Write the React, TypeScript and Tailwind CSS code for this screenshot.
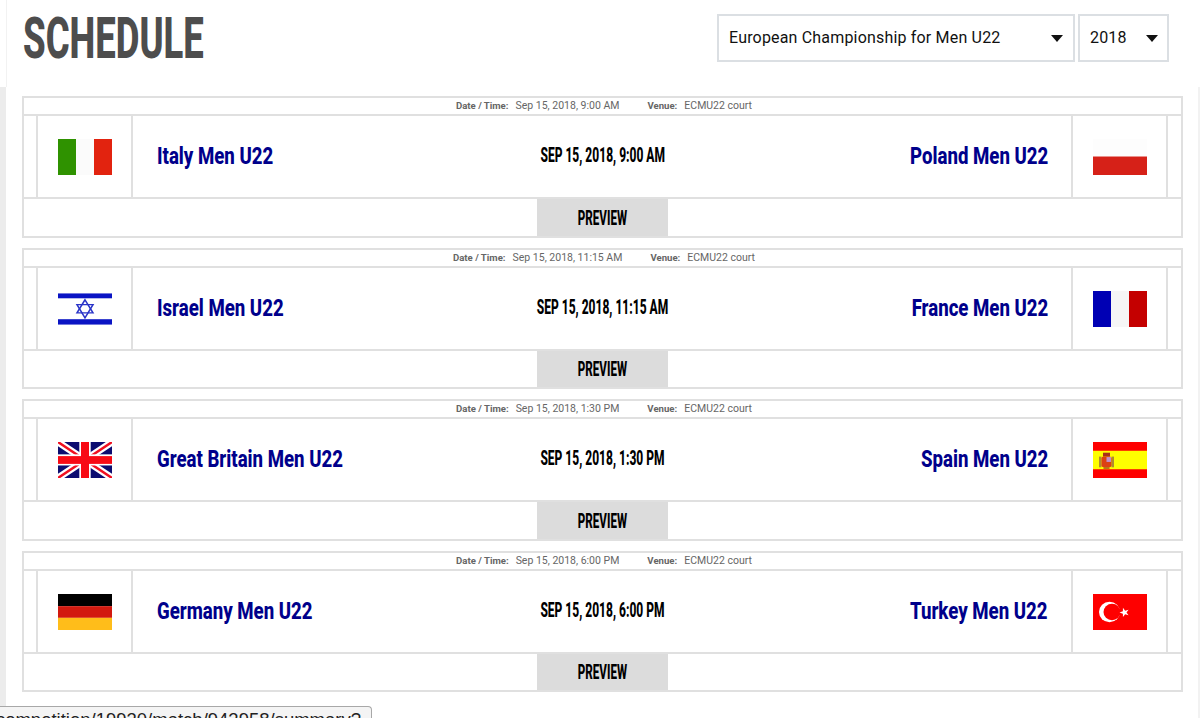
import React from "react";

const Flag = ({ children }: { children: React.ReactNode }) => (
  <svg width="54" height="36" viewBox="0 0 54 37" preserveAspectRatio="none">{children}</svg>
);
const Italy = () => (
  <Flag><rect width="18" height="37" fill="#2f9200"/><rect x="18" width="18" height="37" fill="#fbfbfb"/><rect x="36" width="18" height="37" fill="#e2230f"/></Flag>
);
const Poland = () => (
  <Flag><rect width="54" height="18" fill="#fdfdfd"/><rect y="18" width="54" height="19" fill="#d62118"/></Flag>
);
const Israel = () => (
  <Flag>
    <rect width="54" height="37" fill="#fff"/>
    <rect y="2.500" width="54" height="5" fill="#0a14c4"/>
    <rect y="29" width="54" height="5.500" fill="#0a14c4"/>
    <g fill="none" stroke="#2a34c8" strokeWidth="1.500">
      <path d="M27 9 L35 22.500 H19 Z"/>
      <path d="M27 27.500 L19 14 H35 Z"/>
    </g>
  </Flag>
);
const France = () => (
  <Flag><rect width="18" height="37" fill="#0000b4"/><rect x="18" width="18" height="37" fill="#f6f6f6"/><rect x="36" width="18" height="37" fill="#c40000"/></Flag>
);
const UK = () => (
  <Flag>
    <rect width="54" height="37" fill="#0c0c70"/>
    <path d="M0 0L54 37M54 0L0 37" stroke="#fff" strokeWidth="7"/>
    <path d="M0 0L54 37M54 0L0 37" stroke="#f01020" strokeWidth="2.500"/>
    <rect x="21.300" width="11.400" height="37" fill="#fff"/>
    <rect y="12.700" width="54" height="11.400" fill="#fff"/>
    <rect x="23" width="8" height="37" fill="#f80a14"/>
    <rect y="14.500" width="54" height="8" fill="#f80a14"/>
  </Flag>
);
const Spain = () => (
  <Flag>
    <rect width="54" height="37" fill="#fe0000"/>
    <rect y="9" width="54" height="19" fill="#fefe00"/>
    <rect x="6" y="15" width="2.500" height="11" fill="#b08a30"/>
    <rect x="18.500" y="15" width="2.500" height="11" fill="#b08a30"/>
    <rect x="10" y="11" width="7" height="4" fill="#a8301a"/>
    <rect x="8.500" y="15" width="10" height="11" rx="2" fill="#dc3f14"/>
    <rect x="13.500" y="15.500" width="4.500" height="5" fill="#c090d0"/>
    <rect x="10.500" y="26" width="6" height="1.500" fill="#a05020"/>
  </Flag>
);
const Germany = () => (
  <Flag><rect width="54" height="12.500" fill="#000"/><rect y="12.500" width="54" height="12" fill="#d2190f"/><rect y="24.500" width="54" height="12.500" fill="#ffbd1a"/></Flag>
);
const Turkey = () => (
  <Flag>
    <rect width="54" height="37" fill="#fe0000"/>
    <circle cx="16.500" cy="18.500" r="10.500" fill="#fff"/>
    <circle cx="19" cy="18.500" r="8.500" fill="#fe0000"/>
    <path d="M26.500 19L29.880 17.820 29.950 14.250 32.120 17.100 35.550 16.060 33.500 19 35.550 21.940 32.120 20.900 29.950 23.760 29.880 20.180Z" fill="#fff"/>
  </Flag>
);

const Name = ({ children, right }: { children: string; right?: boolean }) => (
  <span className={`mt-[1px] inline-block whitespace-nowrap text-[24px] leading-none font-extrabold text-[#00008b] scale-x-[0.775] ${right ? "origin-right" : "origin-left"}`}>{children}</span>
);

type CardProps = {
  home: string;
  away: string;
  date: string;
  A: () => React.ReactElement;
  B: () => React.ReactElement;
  foot: string;
  mt: string;
};

const Card = ({ home, away, date, A, B, foot, mt }: CardProps) => (
  <div className={`border-2 border-[#e0e0e0] bg-white ${mt}`}>
    <div className="flex h-[18px] items-center justify-center border-b-2 border-[#e0e0e0] pl-[3px] text-[#666]">
      <span className="mr-[7px] text-[9.600px] font-bold">Date / Time:</span>
      <span className="text-[10.500px]">{date}</span>
      <span className="mr-[7px] ml-[28px] text-[9.600px] font-bold">Venue:</span>
      <span className="text-[10.500px]">ECMU22 court</span>
    </div>
    <div className="flex h-[83px] border-b-2 border-[#e0e0e0]">
      <div className="w-[14px] border-r-2 border-[#e0e0e0]" />
      <div className="flex w-[95px] items-center justify-center border-r-2 border-[#e0e0e0] pl-[1px]"><A /></div>
      <div className="flex flex-1 items-center pr-[23px] pl-[24px]">
        <div className="flex-1"><Name>{home}</Name></div>
        <div className="flex w-0 justify-center">
          <span className="mb-[3px] inline-block scale-x-[0.6] text-[20px] font-extrabold whitespace-nowrap text-black uppercase">{date}</span>
        </div>
        <div className="flex-1 text-right"><Name right>{away}</Name></div>
      </div>
      <div className="flex w-[95px] items-center justify-center border-l-2 border-[#e0e0e0] pl-[1px]"><B /></div>
      <div className="w-[15px] border-l-2 border-[#e0e0e0]" />
    </div>
    <div className={`flex justify-center ${foot}`}>
      <div className="flex w-[131px] items-center justify-center bg-[#dcdcdc]">
        <span className="inline-block scale-x-[0.58] text-[20px] font-extrabold text-black">PREVIEW</span>
      </div>
    </div>
  </div>
);

const Caret = () => (
  <svg width="12" height="7" viewBox="0 0 12 7"><path d="M0 0H12L6 7Z" fill="#111"/></svg>
);

export default function App() {
  return (
    <div className="relative h-[718px] w-[1200px] overflow-hidden bg-white font-['Roboto',sans-serif]">
      <div className="ml-[6px] flex h-[87px] border-l border-[#f2f2f2] pr-[31px] pl-[16px]">
        <h1 className="flex-1 pt-[6px]">
          <span className="inline-block origin-left scale-x-[0.629] text-[58px] leading-[64px] font-extrabold whitespace-nowrap text-[#4d4d4d]">SCHEDULE</span>
        </h1>
        <div className="flex gap-[3px] pt-[14px]">
          <div className="flex h-[48px] w-[358px] items-center justify-between border-2 border-[#dbdfe3] pr-[10px] pl-[10px] text-[16px] tracking-[0.18px] text-[#111]">
            <span>European Championship for Men U22</span><Caret />
          </div>
          <div className="flex h-[48px] w-[91px] items-center justify-between border-2 border-[#dbdfe3] pr-[9px] pl-[10px] text-[16px] tracking-[0.18px] text-[#111]">
            <span>2018</span><Caret />
          </div>
        </div>
      </div>
      <div className="flex h-[631px]">
        <div className="w-[6px] bg-[#ececec]" />
        <div className="flex-1 pt-[9px] pr-[15px] pl-[16px]">
          <Card home="Italy Men U22" away="Poland Men U22" date="Sep 15, 2018, 9:00 AM" A={Italy} B={Poland} foot="h-[37px]" mt="" />
          <Card home="Israel Men U22" away="France Men U22" date="Sep 15, 2018, 11:15 AM" A={Israel} B={France} foot="h-[36px]" mt="mt-[10px]" />
          <Card home="Great Britain Men U22" away="Spain Men U22" date="Sep 15, 2018, 1:30 PM" A={UK} B={Spain} foot="h-[37px]" mt="mt-[10px]" />
          <Card home="Germany Men U22" away="Turkey Men U22" date="Sep 15, 2018, 6:00 PM" A={Germany} B={Turkey} foot="h-[36px]" mt="mt-[10px]" />
        </div>
        <div className="w-[2px] bg-[#f2f2f2]" />
      </div>
      <div className="absolute bottom-0 left-0 h-[12px] w-[372px] overflow-hidden rounded-tr-[4px] border-t border-r border-[#a8a8a8] bg-[#f4f4f4]">
        <span className="absolute top-[2px] right-[10px] font-['Liberation_Sans',sans-serif] text-[18.500px] leading-[22px] whitespace-nowrap text-[#222]">competition/19930/match/943958/summary?</span>
      </div>
    </div>
  );
}
